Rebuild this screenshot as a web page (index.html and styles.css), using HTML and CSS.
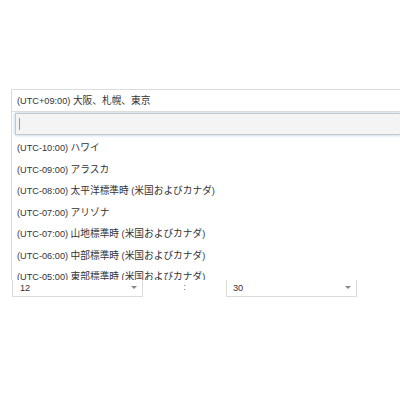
FILE: index.html
```html
<!DOCTYPE html>
<html lang="ja">
<head>
<meta charset="utf-8">
<link rel="stylesheet" href="styles.css">
</head>
<body>
<div class="page">
  <div class="tz">
    <div class="selection">(UTC+09:00) <span class="ja">大阪、札幌、東京</span></div>
    <div class="dropdown">
      <div class="search"><span class="caret"></span></div>
      <ul class="results">
        <li>(UTC-10:00) <span class="ja">ハワイ</span></li>
        <li>(UTC-09:00) <span class="ja">アラスカ</span></li>
        <li>(UTC-08:00) <span class="ja">太平洋標準時</span> (<span class="ja">米国およびカナダ</span>)</li>
        <li>(UTC-07:00) <span class="ja">アリゾナ</span></li>
        <li>(UTC-07:00) <span class="ja">山地標準時</span> (<span class="ja">米国およびカナダ</span>)</li>
        <li>(UTC-06:00) <span class="ja">中部標準時</span> (<span class="ja">米国およびカナダ</span>)</li>
        <li>(UTC-05:00) <span class="ja">東部標準時</span> (<span class="ja">米国およびカナダ</span>)</li>
      </ul>
    </div>
  </div>
  <div class="time">
    <div class="sel sel-h">12<span class="arrow"></span></div>
    <div class="colon">:</div>
    <div class="sel sel-m">30<span class="arrow"></span></div>
  </div>
</div>
</body>
</html>
```
FILE: styles.css
```css
html, body {
  margin: 0;
  padding: 0;
  overflow: hidden;
  background: #fff;
}
body {
  font-family: "Liberation Sans", "Noto Sans CJK JP", sans-serif;
  font-size: 9.2px;
  color: #333;
}
.ja {
  font-size: 9.7px;
}
.page {
  padding: 89px 0 0 11px;
}
.tz {
  position: relative;
  width: 389px;
}
.selection {
  height: 21px;
  line-height: 22px;
  border: 1px solid #dcdcdc;
  border-right: none;
  padding-left: 5px;
  background: #fff;
}
.dropdown {
  position: absolute;
  top: 23px;
  left: 0;
  right: 0;
  height: 168px;
  overflow: hidden;
  background: #fff;
  border-left: 1px solid #dcdcdc;
  z-index: 2;
}
.search {
  margin: 1px 0 0 3px;
  height: 20px;
  border: 1px solid #c8c8c8;
  border-right: none;
  background: #f4f4f4;
  box-shadow: 0 0 3px rgba(120, 170, 225, 0.7);
  display: flex;
  align-items: center;
  padding-left: 3px;
}
.caret {
  width: 1px;
  height: 12px;
  background: #999;
}
.results {
  list-style: none;
  margin: 2px 0 0 0;
  padding: 0;
}
.results li {
  height: 21.5px;
  line-height: 21.5px;
  padding-left: 5px;
  white-space: nowrap;
}
.time {
  display: flex;
  align-items: center;
  margin-top: 165px;
  margin-left: 1px;
}
.sel {
  position: relative;
  height: 18px;
  line-height: 20px;
  border: 1px solid #dcdcdc;
  padding-left: 7px;
  background: #fff;
  box-sizing: content-box;
}
.sel-h {
  width: 122px;
}
.sel-m {
  width: 123px;
  padding-left: 6px;
}
.colon {
  width: 83px;
  text-align: center;
  color: #666;
}
.arrow {
  position: absolute;
  right: 5px;
  top: 8px;
  width: 0;
  height: 0;
  border-left: 3px solid transparent;
  border-right: 3px solid transparent;
  border-top: 3px solid #888;
}
```
